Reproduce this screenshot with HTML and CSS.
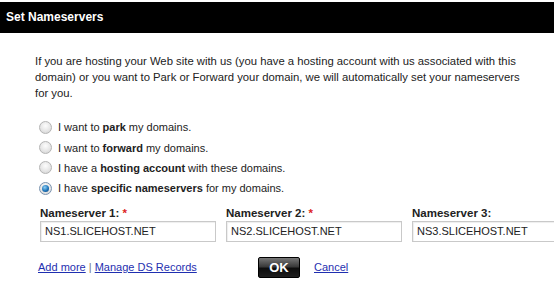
FILE: index.html
```html
<!DOCTYPE html>
<html lang="en">
<head>
  <meta charset="UTF-8" />
  <title>Set Nameservers</title>
  <link rel="stylesheet" href="styles.css">
</head>
<body>

  <div class="dialog">
    <div class="dialog-title">Set Nameservers</div>

    <div class="dialog-body">
      <p class="intro">If you are hosting your Web site with us (you have a hosting account with us associated with this domain) or you want to Park or Forward your domain, we will automatically set your nameservers for you.</p>

      <div class="options">
        <label class="option"><span class="radio"></span>I want to <b>park</b> my domains.</label>
        <label class="option"><span class="radio"></span>I want to <b>forward</b> my domains.</label>
        <label class="option"><span class="radio"></span>I have a <b>hosting account</b> with these domains.</label>
        <label class="option"><span class="radio checked"></span>I have <b>specific nameservers</b> for my domains.</label>
      </div>

      <div class="ns-grid">
        <div class="ns-field">
          <div class="ns-label">Nameserver 1: <span class="req">*</span></div>
          <input type="text" value="NS1.SLICEHOST.NET" />
        </div>
        <div class="ns-field">
          <div class="ns-label">Nameserver 2: <span class="req">*</span></div>
          <input type="text" value="NS2.SLICEHOST.NET" />
        </div>
        <div class="ns-field">
          <div class="ns-label">Nameserver 3:</div>
          <input type="text" value="NS3.SLICEHOST.NET" />
        </div>
      </div>

      <div class="actions">
        <div class="links"><a href="#">Add more</a> <span class="sep">|</span> <a href="#">Manage DS Records</a></div>
        <button class="ok-btn">OK</button>
        <a href="#" class="cancel">Cancel</a>
      </div>
    </div>
  </div>

</body>
</html>
```

FILE: styles.css
```css
* {
  margin: 0;
  padding: 0;
  box-sizing: border-box;
}

body {
  font-family: "Liberation Sans", Arial, sans-serif;
  font-size: 11px;
  color: #222;
  background: #fff;
  overflow: hidden;
}

.dialog {
  padding-top: 2px;
  width: 554px;
  overflow: hidden;
}

.dialog-title {
  background: #000;
  color: #fff;
  font-size: 12px;
  font-weight: bold;
  height: 31px;
  line-height: 30px;
  padding-left: 6px;
}

.dialog-body {
  padding: 20px 0 0 35px;
}

.intro {
  width: 490px;
  font-size: 11.3px;
  line-height: 16px;
  color: #222;
}

.options {
  margin-top: 16px;
  padding-left: 4px;
}

.option {
  display: flex;
  align-items: center;
  height: 20.4px;
  color: #222;
}

.option b {
  font-weight: bold;
  margin: 0 3px;
}

.radio {
  width: 13px;
  height: 13px;
  border-radius: 50%;
  border: 1px solid #b4b4b4;
  background: radial-gradient(circle at 50% 35%, #fdfdfd 0%, #e4e4e4 60%, #cfcfcf 100%);
  margin-right: 6px;
  position: relative;
  flex-shrink: 0;
}

.radio.checked {
  border-color: #7a93b0;
}

.radio.checked::after {
  content: '';
  position: absolute;
  left: 2px;
  top: 2px;
  width: 7px;
  height: 7px;
  border-radius: 50%;
  background: radial-gradient(circle at 40% 35%, #8fd0f5 0%, #1d73b8 55%, #0b3e73 100%);
}

.ns-grid {
  display: flex;
  gap: 10px;
  margin-top: 6px;
  padding-left: 5px;
}

.ns-field {
  width: 176px;
  flex-shrink: 0;
}

.ns-label {
  font-size: 11.5px;
  font-weight: bold;
  line-height: 16px;
  height: 16px;
  color: #222;
}

.req {
  color: #d22;
  font-weight: bold;
}

.ns-field input {
  display: block;
  width: 176px;
  height: 21px;
  border: 1px solid #c9c9c9;
  box-shadow: inset 1px 1px 1px #eee;
  font-family: "Liberation Sans", Arial, sans-serif;
  font-size: 11px;
  color: #222;
  padding: 0 4px;
  background: #fff;
}

.actions {
  display: flex;
  align-items: center;
  margin-top: 15px;
  padding-left: 3px;
}

.links {
  width: 220px;
  color: #666;
}

.links a,
.cancel {
  color: #1f2fb0;
  text-decoration: underline;
}

.sep {
  color: #777;
}

.ok-btn {
  width: 42px;
  height: 21px;
  border: 1px solid #000;
  border-radius: 2px;
  background: linear-gradient(to bottom, #777 0%, #3a3a3a 45%, #0d0d0d 55%, #1e1e1e 100%);
  color: #fff;
  font-family: "Liberation Sans", Arial, sans-serif;
  font-size: 13px;
  font-weight: bold;
  cursor: pointer;
}

.cancel {
  margin-left: 14px;
}
```
